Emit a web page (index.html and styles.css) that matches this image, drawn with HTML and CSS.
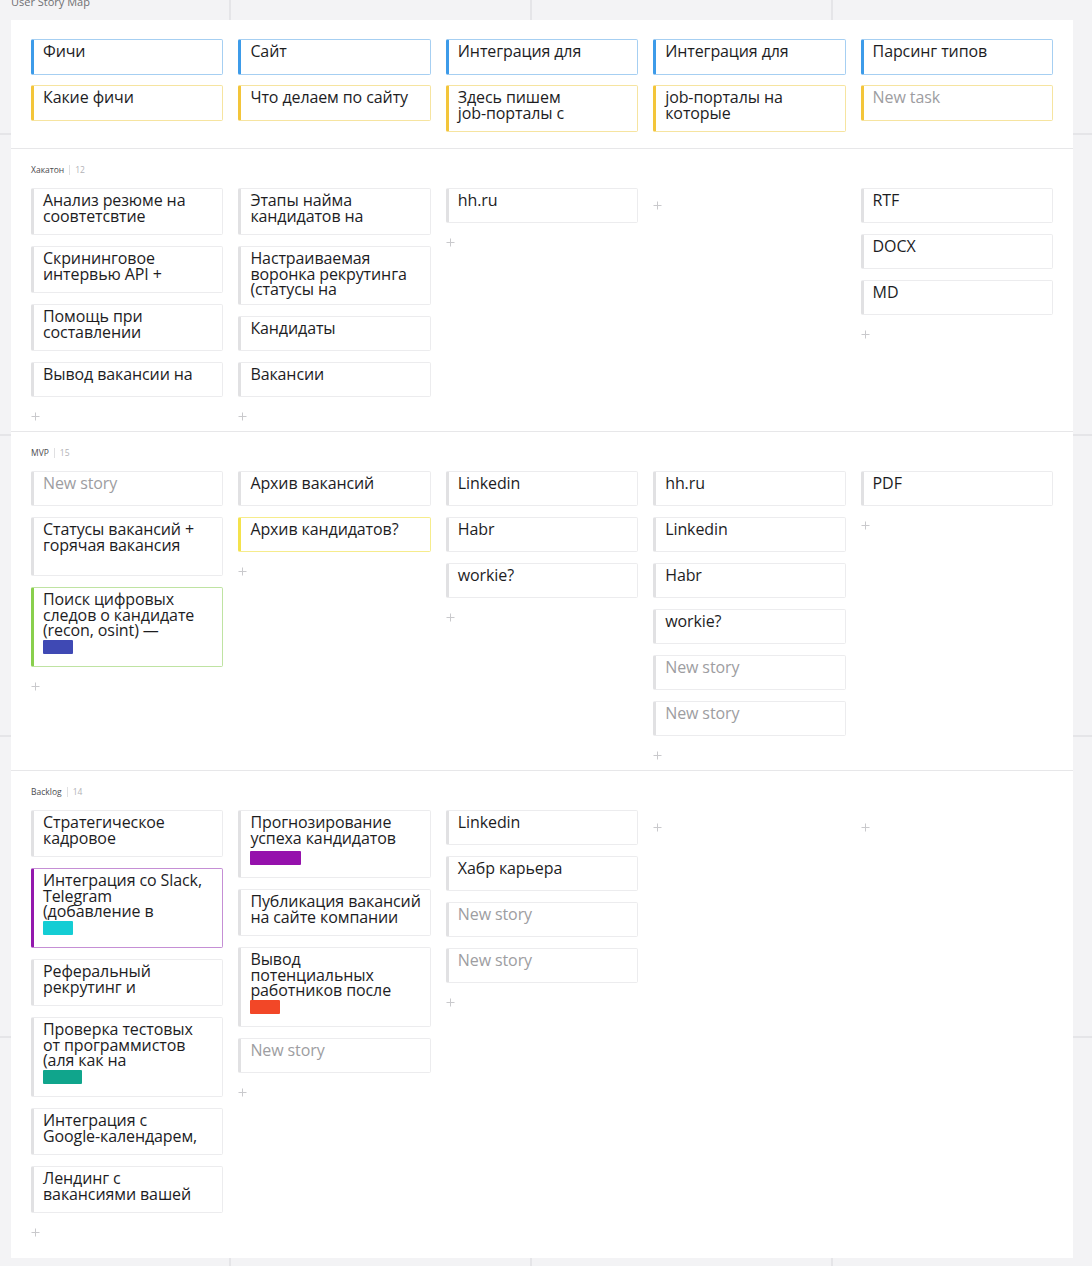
FILE: index.html
```html
<!DOCTYPE html>
<html lang="ru">
<head>
<meta charset="utf-8">
<title>User Story Map</title>
<link rel="stylesheet" href="styles.css">
</head>
<body>
<div class="title">User Story Map</div>
<main class="board">
  <section class="row row-head">
    <div class="cols">
      <div class="col">
        <div class="card blue"><div class="text t1">Фичи</div></div>
        <div class="card yellow"><div class="text t1">Какие фичи</div></div>
      </div>
      <div class="col">
        <div class="card blue"><div class="text t1">Сайт</div></div>
        <div class="card yellow"><div class="text t1">Что делаем по сайту</div></div>
      </div>
      <div class="col">
        <div class="card blue"><div class="text t1">Интеграция для</div></div>
        <div class="card yellow"><div class="text t2">Здесь пишем<br>job-порталы с</div></div>
      </div>
      <div class="col">
        <div class="card blue"><div class="text t1">Интеграция для</div></div>
        <div class="card yellow"><div class="text t2">job-порталы на<br>которые</div></div>
      </div>
      <div class="col">
        <div class="card blue"><div class="text t1">Парсинг типов</div></div>
        <div class="card yellow"><div class="text t1 placeholder">New task</div></div>
      </div>
    </div>
  </section>

  <section class="row">
    <div class="label">Хакатон<span class="count">12</span></div>
    <div class="cols">
      <div class="col">
        <div class="card"><div class="text t2">Анализ резюме на<br>соовтетсвтие</div></div>
        <div class="card"><div class="text t2">Скрининговое<br>интервью API +</div></div>
        <div class="card"><div class="text t2">Помощь при<br>составлении</div></div>
        <div class="card"><div class="text t1">Вывод вакансии на</div></div>
        <div class="add"><svg viewBox="0 0 9 9" width="9" height="9"><path d="M4.5 0.5v8M0.5 4.5h8"/></svg></div>
      </div>
      <div class="col">
        <div class="card"><div class="text t2">Этапы найма<br>кандидатов на</div></div>
        <div class="card"><div class="text t3">Настраиваемая<br>воронка рекрутинга<br>(статусы на</div></div>
        <div class="card"><div class="text t1">Кандидаты</div></div>
        <div class="card"><div class="text t1">Вакансии</div></div>
        <div class="add"><svg viewBox="0 0 9 9" width="9" height="9"><path d="M4.5 0.5v8M0.5 4.5h8"/></svg></div>
      </div>
      <div class="col">
        <div class="card"><div class="text t1">hh.ru</div></div>
        <div class="add"><svg viewBox="0 0 9 9" width="9" height="9"><path d="M4.5 0.5v8M0.5 4.5h8"/></svg></div>
      </div>
      <div class="col">
        <div class="add empty"><svg viewBox="0 0 9 9" width="9" height="9"><path d="M4.5 0.5v8M0.5 4.5h8"/></svg></div>
      </div>
      <div class="col">
        <div class="card"><div class="text t1">RTF</div></div>
        <div class="card"><div class="text t1">DOCX</div></div>
        <div class="card"><div class="text t1">MD</div></div>
        <div class="add"><svg viewBox="0 0 9 9" width="9" height="9"><path d="M4.5 0.5v8M0.5 4.5h8"/></svg></div>
      </div>
    </div>
  </section>

  <section class="row">
    <div class="label">MVP<span class="count">15</span></div>
    <div class="cols">
      <div class="col">
        <div class="card"><div class="text t1 placeholder">New story</div></div>
        <div class="card"><div class="text t3">Статусы вакансий +<br>горячая вакансия</div></div>
        <div class="card green"><div class="text t3">Поиск цифровых<br>следов о кандидате<br>(recon, osint) —</div><span class="tag indigo w30"></span></div>
        <div class="add"><svg viewBox="0 0 9 9" width="9" height="9"><path d="M4.5 0.5v8M0.5 4.5h8"/></svg></div>
      </div>
      <div class="col">
        <div class="card"><div class="text t1">Архив вакансий</div></div>
        <div class="card lemon"><div class="text t1">Архив кандидатов?</div></div>
        <div class="add"><svg viewBox="0 0 9 9" width="9" height="9"><path d="M4.5 0.5v8M0.5 4.5h8"/></svg></div>
      </div>
      <div class="col">
        <div class="card"><div class="text t1">Linkedin</div></div>
        <div class="card"><div class="text t1">Habr</div></div>
        <div class="card"><div class="text t1">workie?</div></div>
        <div class="add"><svg viewBox="0 0 9 9" width="9" height="9"><path d="M4.5 0.5v8M0.5 4.5h8"/></svg></div>
      </div>
      <div class="col">
        <div class="card"><div class="text t1">hh.ru</div></div>
        <div class="card"><div class="text t1">Linkedin</div></div>
        <div class="card"><div class="text t1">Habr</div></div>
        <div class="card"><div class="text t1">workie?</div></div>
        <div class="card"><div class="text t1 placeholder">New story</div></div>
        <div class="card"><div class="text t1 placeholder">New story</div></div>
        <div class="add"><svg viewBox="0 0 9 9" width="9" height="9"><path d="M4.5 0.5v8M0.5 4.5h8"/></svg></div>
      </div>
      <div class="col">
        <div class="card"><div class="text t1">PDF</div></div>
        <div class="add"><svg viewBox="0 0 9 9" width="9" height="9"><path d="M4.5 0.5v8M0.5 4.5h8"/></svg></div>
      </div>
    </div>
  </section>

  <section class="row row-last">
    <div class="label">Backlog<span class="count">14</span></div>
    <div class="cols">
      <div class="col">
        <div class="card"><div class="text t2">Стратегическое<br>кадровое</div></div>
        <div class="card purple"><div class="text t3">Интеграция со Slack,<br>Telegram<br>(добавление в</div><span class="tag cyan w30"></span></div>
        <div class="card"><div class="text t2">Реферальный<br>рекрутинг и</div></div>
        <div class="card"><div class="text t3">Проверка тестовых<br>от программистов<br>(аля как на</div><span class="tag teal w39"></span></div>
        <div class="card"><div class="text t2">Интеграция с<br>Google-календарем,</div></div>
        <div class="card"><div class="text t2">Лендинг с<br>вакансиями вашей</div></div>
        <div class="add"><svg viewBox="0 0 9 9" width="9" height="9"><path d="M4.5 0.5v8M0.5 4.5h8"/></svg></div>
      </div>
      <div class="col">
        <div class="card"><div class="text t2">Прогнозирование<br>успеха кандидатов</div><span class="tag violet w51"></span></div>
        <div class="card"><div class="text t2">Публикация вакансий<br>на сайте компании</div></div>
        <div class="card"><div class="text t3">Вывод<br>потенциальных<br>работников после</div><span class="tag red w30"></span></div>
        <div class="card"><div class="text t1 placeholder">New story</div></div>
        <div class="add"><svg viewBox="0 0 9 9" width="9" height="9"><path d="M4.5 0.5v8M0.5 4.5h8"/></svg></div>
      </div>
      <div class="col">
        <div class="card"><div class="text t1">Linkedin</div></div>
        <div class="card"><div class="text t1">Хабр карьера</div></div>
        <div class="card"><div class="text t1 placeholder">New story</div></div>
        <div class="card"><div class="text t1 placeholder">New story</div></div>
        <div class="add"><svg viewBox="0 0 9 9" width="9" height="9"><path d="M4.5 0.5v8M0.5 4.5h8"/></svg></div>
      </div>
      <div class="col">
        <div class="add empty"><svg viewBox="0 0 9 9" width="9" height="9"><path d="M4.5 0.5v8M0.5 4.5h8"/></svg></div>
      </div>
      <div class="col">
        <div class="add empty"><svg viewBox="0 0 9 9" width="9" height="9"><path d="M4.5 0.5v8M0.5 4.5h8"/></svg></div>
      </div>
    </div>
  </section>
</main>
</body>
</html>
```

FILE: styles.css
```css
html, body {
  margin: 0;
  padding: 0;
}

body {
  font-family: "Open Sans", "Noto Sans", sans-serif;
  color: #1d1d1f;
  background-color: #f3f3f5;
  background-image:
    linear-gradient(to right, #e5e5e8 2px, transparent 2px),
    linear-gradient(to bottom, #e5e5e8 2px, transparent 2px);
  background-size: 301px 301px;
  background-position: 229px 133px;
  min-height: 1266px;
}

.title {
  height: 20px;
  line-height: 3px;
  padding-left: 11px;
  font-size: 11px;
  color: #6f6f72;
  overflow: visible;
}

.board {
  margin-left: 11px;
  width: 1062px;
  background: #ffffff;
  padding-bottom: 11px;
}

.row {
  border-bottom: 1px solid #e7e7e9;
  padding: 15px 0 7px;
}

.row-head {
  padding: 19px 0 16px;
}

.row-head .col {
  gap: 10px;
}

.row-head .t1 {
  height: 18px;
}

.row-last {
  border-bottom: none;
}

.label {
  padding-left: 20px;
  height: 12px;
  line-height: 12px;
  font-size: 8.5px;
  color: #4b4b4f;
  margin-bottom: 12px;
  display: flex;
  align-items: center;
}

.count {
  margin-left: 5px;
  padding-left: 5px;
  border-left: 1px solid #e0e0e2;
  line-height: 10px;
  color: #b2b2b6;
}

.cols {
  display: grid;
  grid-template-columns: repeat(5, 1fr);
  column-gap: 15px;
  padding: 0 20px;
  align-items: start;
}

.col {
  display: flex;
  flex-direction: column;
  gap: 11px;
  min-width: 0;
}

.card {
  display: flex;
  flex-direction: column;
  align-items: flex-start;
  border: 1px solid #ececee;
  border-left: 3px solid #e1e1e3;
  border-radius: 2px;
  padding: 4px 9px 12px;
  background: #ffffff;
}

.text {
  font-size: 16px;
  line-height: 15.5px;
  white-space: nowrap;
  letter-spacing: -0.1px;
}

.t1 { height: 17px; }
.t2 { height: 29px; }
.t3 { height: 41px; }

.placeholder {
  color: #9d9da1;
}

.card.blue {
  border-color: #a6cff2;
  border-left-color: #3d9be9;
}

.card.yellow {
  border-color: #f6e4a0;
  border-left-color: #f3c53a;
}

.card.lemon {
  border-color: #f6ec8c;
  border-left-color: #f4e24c;
}

.card.green {
  border-color: #bfe3a2;
  border-left-color: #89cf4d;
}

.card.purple {
  border-color: #c58fd5;
  border-left-color: #9318ad;
}

.tag {
  display: block;
  height: 14px;
  margin-top: 7px;
  border-radius: 1px;
}

.w30 { width: 30px; }
.w39 { width: 39px; }
.w51 { width: 51px; }

.indigo { background: #3f49b4; }
.cyan { background: #14cdd4; }
.teal { background: #10a58c; }
.violet { background: #9511ac; }
.red { background: #f24727; }

.add {
  height: 16px;
  display: flex;
  align-items: center;
}

.add.empty {
  height: 35px;
}

.add svg {
  display: block;
}

.add svg path {
  stroke: #c9c9cc;
  stroke-width: 1;
  fill: none;
}
```
